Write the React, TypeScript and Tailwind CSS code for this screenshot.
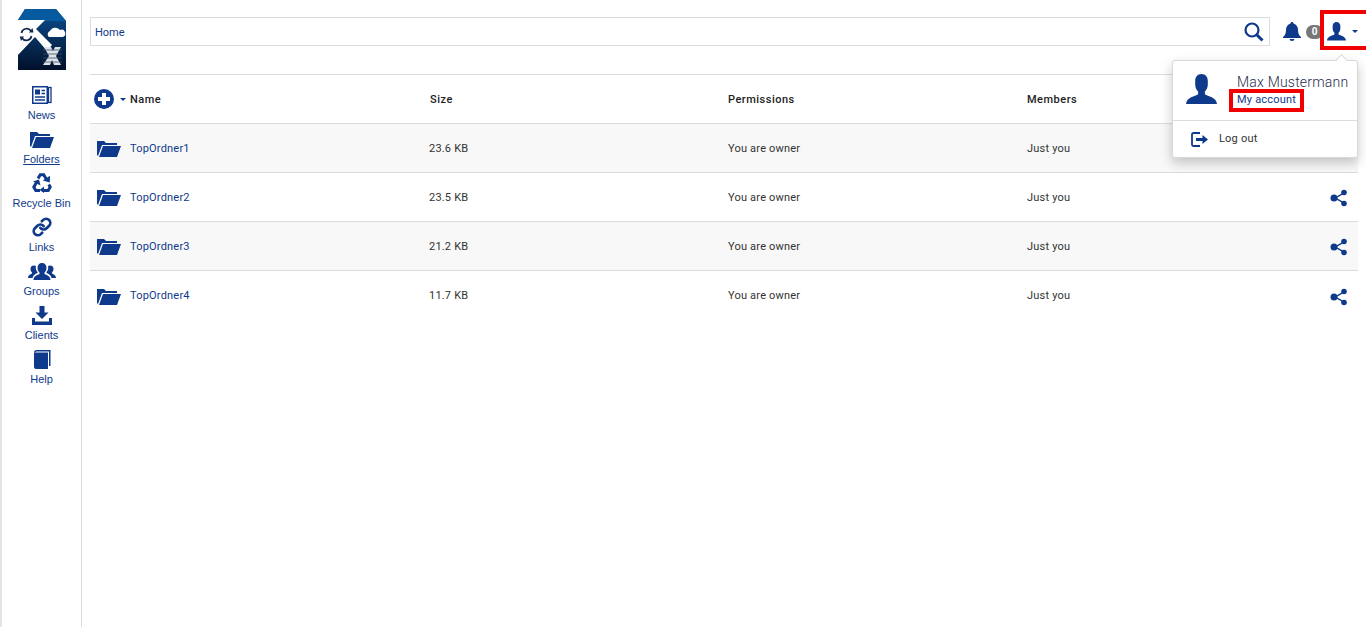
import React from "react";
import { Link } from "lucide-react";

const navy = "#0f3a8c";

function Logo() {
  return (
    <svg width="48" height="62" viewBox="0 0 48 62">
      <defs>
        <linearGradient id="logoBody" x1="0" y1="0" x2="0" y2="1">
          <stop offset="0" stopColor="#0c4f90" />
          <stop offset="1" stopColor="#011029" />
        </linearGradient>
      </defs>
      <path d="M0 11 L7 0 H38 L48 12 V61 H0 Z" fill="url(#logoBody)" />
      <path d="M0 11 L7 0 H38 L48 12 H0 Z" fill="#075a9e" />
      <path d="M0 11 H27 L18 20 L34 36 L29 42 L17 28 L0 46 Z" fill="#fff" />
      <path d="M3.500 24 a5.200 5.200 0 0 1 9.500 -2 M13.500 27 a5.200 5.200 0 0 1 -9.500 2" fill="none" stroke="#12294f" strokeWidth="1.700" />
      <path d="M11 23.500 H15.500 L14.500 19 Z M6 27.500 H1.800 L3 32 Z" fill="#12294f" />
      <path d="M31 28 a3.500 3.500 0 0 1 1 -6 a6 6 0 0 1 10 -1 a3.500 3.500 0 0 1 3 7 Z" fill="#fff" />
      <path d="M26 38 H33 L35 42 L37 38 H43 L38 47 L43 56 H36 L34 51 L32 56 H25 L31 47 Z" fill="#dfe2e7" />
      <path d="M25 41 H44 M25 45 H44 M25 49 H44 M25 53 H44" stroke="#3a5070" strokeWidth="0.800" />
    </svg>
  );
}

function Person({ size }: { size: number }) {
  return (
    <svg width={size} height={size} viewBox="0 0 32 32" fill={navy}>
      <path d="M16 0 c-4 0 -6.500 3 -6.500 7 v4 c0 3 1.500 5.500 3 7 v3 c-3 2 -12 3 -12.500 10 h32 c-.5 -7 -9.500 -8 -12.500 -10 v-3 c1.500 -1.500 3 -4 3 -7 v-4 c0 -4 -2.500 -7 -6.500 -7 Z" />
    </svg>
  );
}

function FolderOpen({ w, h }: { w: number; h: number }) {
  return (
    <svg width={w} height={h} viewBox="0 0 24 18">
      <path d="M0 16 V2 H7 L9 4 H20 V6 H5 L1 17 Z" fill={navy} />
      <path d="M6 7 H24 L20 18 H2 Z" fill={navy} />
    </svg>
  );
}

function ShareIcon() {
  return (
    <svg width="18" height="18" viewBox="0 0 18 18" fill={navy}>
      <path d="M5 8.300 L13 3.800 L13.600 5 L5.600 9.500 Z M5.600 8.500 L13.600 13 L13 14.200 L5 9.700 Z" />
      <circle cx="4" cy="9" r="3.500" />
      <circle cx="14" cy="3.500" r="2.800" />
      <circle cx="14" cy="14.500" r="2.800" />
    </svg>
  );
}

const navItems: { label: string; icon: React.ReactNode; underline?: boolean }[] = [
  {
    label: "News",
    icon: (
      <svg width="20" height="18" viewBox="0 0 20 18" fill="none" stroke={navy}>
        <rect x="0.750" y="0.750" width="14.500" height="16.500" strokeWidth="1.500" />
        <rect x="16.500" y="1.500" width="2.500" height="15" strokeWidth="1.300" />
        <rect x="3" y="3.500" width="5" height="5" fill={navy} stroke="none" />
        <path d="M9.500 4.500 H13 M9.500 7.500 H13 M3 11 H13 M3 14 H13" strokeWidth="1.500" />
      </svg>
    ),
  },
  { label: "Folders", icon: <FolderOpen w={24} h={18} />, underline: true },
  {
    label: "Recycle Bin",
    icon: (
      <svg width="20" height="20" viewBox="0 0 20 20" fill="none" stroke={navy} strokeWidth="3">
        <path d="M6 5.500 L8.300 1.800 H11.700 L14.500 6.500" />
        <path d="M10.800 7.500 L17.800 9.500 L18 2.800 Z" fill={navy} stroke="none" />
        <path d="M8 17.500 H3.800 L1.800 14 L4.500 9.500" />
        <path d="M1 8.500 L7 6.500 L8.500 12.500 Z" fill={navy} stroke="none" />
        <path d="M11.500 17.500 H16.200 L18.200 14 L16.800 11.500" />
        <path d="M12 13.500 V20 L7.500 17 Z" fill={navy} stroke="none" />
      </svg>
    ),
  },
  { label: "Links", icon: <Link size={20} strokeWidth={3.2} color={navy} /> },
  {
    label: "Groups",
    icon: (
      <svg width="28" height="17" viewBox="0 0 28 17" fill={navy}>
        <path d="M14 0 c-3 0 -4.500 2 -4.500 5 c0 2 1 3.500 2 4.500 v1.500 c-2 1 -6 2 -6 6 h17 c0 -4 -4 -5 -6 -6 v-1.500 c1 -1 2 -2.500 2 -4.500 c0 -3 -1.500 -5 -4.500 -5 Z" />
        <path d="M6 2.500 c-2.500 0 -3.500 1.500 -3.500 3.500 c0 1.500 .7 2.500 1.500 3.500 v1 c-1.500 1 -4 1.500 -4 4.500 h4.500 c.5 -2.500 2.500 -4 5 -5 v-1 c-.8 -.9 -1.500 -2 -1.700 -3.500 c-.1 -1 0 -2 .2 -2.500 c-.5 -.3 -1.200 -.5 -2 -.5 Z" />
        <path d="M22 2.500 c2.500 0 3.500 1.500 3.500 3.500 c0 1.500 -.7 2.500 -1.500 3.500 v1 c1.500 1 4 1.500 4 4.500 h-4.500 c-.5 -2.500 -2.500 -4 -5 -5 v-1 c.8 -.9 1.500 -2 1.700 -3.500 c.1 -1 0 -2 -.2 -2.500 c.5 -.3 1.200 -.5 2 -.5 Z" />
      </svg>
    ),
  },
  {
    label: "Clients",
    icon: (
      <svg width="20" height="19" viewBox="0 0 20 19" fill={navy}>
        <path d="M7.500 0 H12.500 V6.500 H16.500 L10 13 L3.500 6.500 H7.500 Z" />
        <path d="M0 12 H3 V15.500 H17 V12 H20 V19 H0 Z" />
      </svg>
    ),
  },
  {
    label: "Help",
    icon: (
      <svg width="18" height="19" viewBox="0 0 18 19" fill={navy}>
        <path d="M1 2.500 C1 1 2 0 3.500 0 H17.500 V16 H16 V1.500 H3.500 C3 1.500 2.500 2 2.500 2.500 Z" />
        <path d="M1 2.500 H15 V19 H3 C2 19 1 18 1 17 Z" />
      </svg>
    ),
  },
];

const rows = [
  { name: "TopOrdner1", size: "23.6 KB" },
  { name: "TopOrdner2", size: "23.5 KB" },
  { name: "TopOrdner3", size: "21.2 KB" },
  { name: "TopOrdner4", size: "11.7 KB" },
];

export default function App() {
  return (
    <div className="relative flex h-[627px] overflow-hidden bg-white font-['Roboto',sans-serif] text-[11px] tracking-[0.2px] text-[#333]">
      {/* Sidebar */}
      <aside className="flex w-[82px] shrink-0 flex-col items-center border-r border-r-[#dcdcdc] border-l-2 border-l-[#e4e4e4] pt-[9px]">
        <Logo />
        <nav className="mt-[14px] flex flex-col items-center font-['Liberation_Sans',sans-serif] text-[11px] tracking-normal text-[#0f3a8c]">
          {navItems.map((item) => (
            <div key={item.label} className="flex h-[44px] w-[78px] flex-col items-center">
              <div className="flex h-[20px] items-center justify-center">{item.icon}</div>
              <span className={`mt-[3px] leading-[14px] ${item.underline ? "underline" : ""}`}>{item.label}</span>
            </div>
          ))}
        </nav>
      </aside>

      {/* Main */}
      <main className="min-w-0 flex-1 pl-[8px] pr-[8px]">
        <div className="flex h-[75px] items-start border-b border-[#dcdcdc] pt-[17px]">
          <div className="flex h-[29px] w-[1180px] items-center justify-between border border-[#dcdcdc] pl-[4px] pr-[5px] text-[#0f3a8c]">
            <span className="mt-[3px] tracking-normal">Home</span>
            <svg width="20" height="20" viewBox="0 0 20 20" fill="none" stroke={navy}>
              <circle cx="8" cy="8" r="6.500" strokeWidth="2.200" />
              <path d="M12.500 12.500 L18.500 18.500" strokeWidth="3" />
            </svg>
          </div>
          <div className="ml-[13px] mt-[5px] flex items-center">
            <svg width="18" height="19" viewBox="0 0 18 19" fill={navy}>
              <path d="M9 0 C8 0 7.500 .7 7.500 1.500 C4.500 2.300 3 5 3 8 C3 11.500 2 13.500 0 15 V16 H18 V15 C16 13.500 15 11.500 15 8 C15 5 13.500 2.300 10.500 1.500 C10.500 .7 10 0 9 0 Z" />
              <path d="M6.500 17 a2.500 2 0 0 0 5 0 Z" />
            </svg>
            <span className="ml-[5px] flex h-[14px] w-[17px] items-center justify-center rounded-full bg-[#777] text-[10px] font-bold tracking-normal text-white">0</span>
            <div className="ml-[4px]"><Person size={19} /></div>
            <span className="ml-[6px] h-0 w-0 border-x-[3px] border-t-[3px] border-x-transparent border-t-[#0f3a8c]" />
          </div>
        </div>

        {/* Table */}
        <div className="flex h-[49px] items-center border-b border-[#dcdcdc] font-medium tracking-[0.5px] text-[#222]">
          <div className="flex w-[339px] items-center pl-[4px]">
            <svg width="20" height="20" viewBox="0 0 20 20">
              <circle cx="10" cy="10" r="10" fill={navy} />
              <path d="M8 4 H12 V8 H16 V12 H12 V16 H8 V12 H4 V8 H8 Z" fill="#fff" />
            </svg>
            <span className="ml-[6px] h-0 w-0 border-x-[3px] border-t-[3px] border-x-transparent border-t-[#0f3a8c]" />
            <span className="ml-[4px] mt-[2px]">Name</span>
          </div>
          <div className="mt-[2px] w-[299px] pl-px">Size</div>
          <div className="mt-[2px] w-[299px]">Permissions</div>
          <div className="mt-[2px]">Members</div>
        </div>
        {rows.map((row, i) => (
          <div key={row.name} className={`flex h-[49px] items-center ${i === 3 ? "" : "border-b border-[#dcdcdc]"} ${i % 2 === 0 ? "bg-[#f8f8f8]" : "bg-white"}`}>
            <div className="flex w-[339px] items-center pl-[7px]">
              <FolderOpen w={24} h={18} />
              <span className="ml-[9px] mt-[2px] text-[#0f3a8c]">{row.name}</span>
            </div>
            <div className="mt-[2px] w-[299px]">{row.size}</div>
            <div className="mt-[2px] w-[299px]">You are owner</div>
            <div className="mt-[2px] flex-1">Just you</div>
            <div className="mr-[10px] mt-[2px]"><ShareIcon /></div>
          </div>
        ))}
      </main>

      {/* User menu highlight */}
      <div className="absolute left-[1320px] top-[10px] h-[40px] w-[46px] border-[4px] border-r-0 border-[#f00000]" />

      {/* User dropdown */}
      <div className="absolute left-[1172px] top-[60px] w-[186px] rounded-[3px] border border-[#d8d8d8] bg-white shadow-[0_5px_12px_rgba(0,0,0,0.22)]">
        <div className="absolute -top-[5px] right-[11px] h-[9px] w-[9px] rotate-45 border-l border-t border-[#d8d8d8] bg-white" />
        <div className="flex h-[60px] border-b border-[#dcdcdc]">
          <div className="ml-[13px] mt-[13px]"><Person size={31} /></div>
          <div className="ml-[20px] mt-[13px]">
            <div className="text-[14px] font-light leading-[16px] text-[#1f2d4d]">Max Mustermann</div>
            <div className="relative mt-[3px] text-[11px] leading-[14px] text-[#0f3a8c]">
              My account
              <div className="absolute -left-[8px] -top-[4px] h-[23px] w-[75px] border-[4px] border-[#f00000]" />
            </div>
          </div>
        </div>
        <div className="flex h-[36px] items-center pl-[18px]">
          <svg width="17" height="15" viewBox="0 0 17 15" fill="none" stroke={navy} strokeWidth="1.800">
            <path d="M9 1 H2.500 A1.500 1.500 0 0 0 1 2.500 V12.500 A1.500 1.500 0 0 0 2.500 14 H9" />
            <path d="M5 7.500 H12" strokeWidth="3" />
            <path d="M11.500 3 L17 7.500 L11.500 12 Z" fill={navy} stroke="none" />
          </svg>
          <span className="ml-[11px] text-[#333]">Log out</span>
        </div>
      </div>
    </div>
  );
}
